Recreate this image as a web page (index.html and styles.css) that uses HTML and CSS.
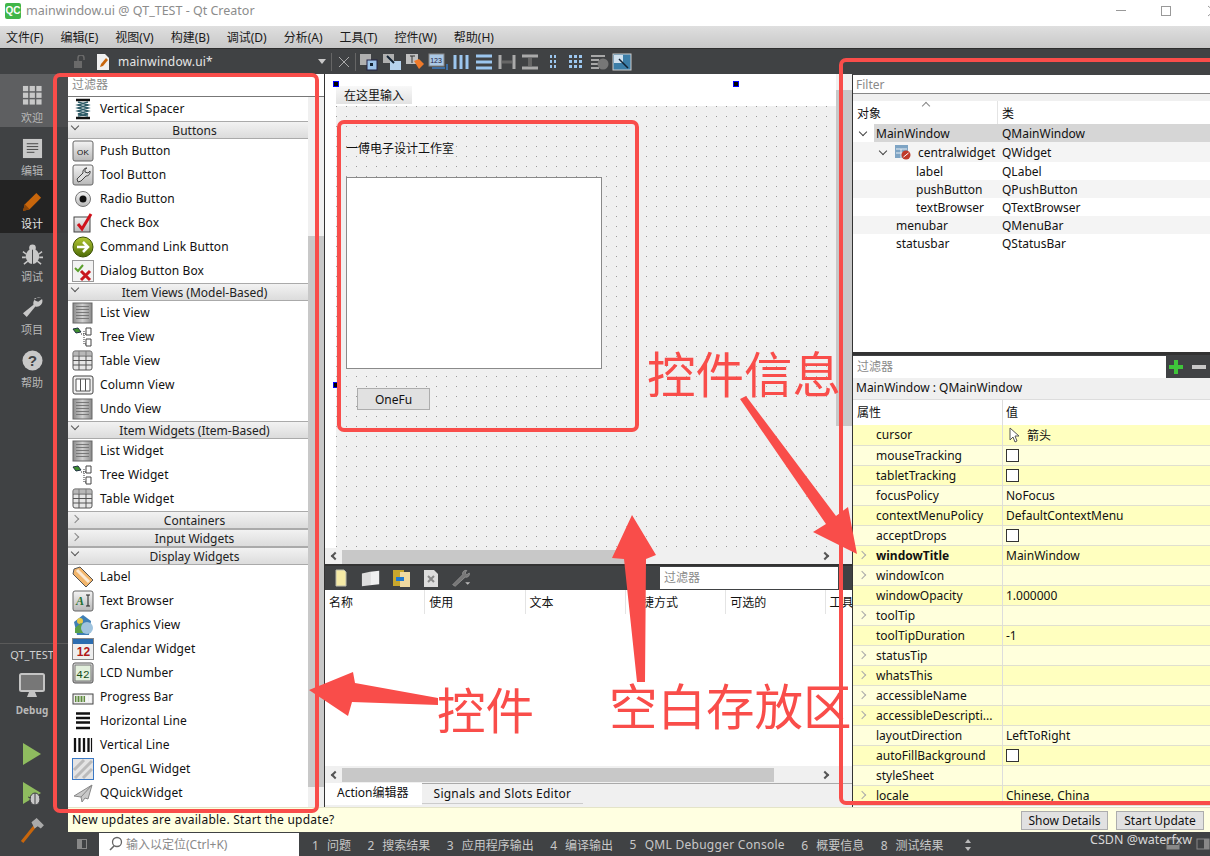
FILE: index.html
```html
<!DOCTYPE html>
<html lang="zh-CN">
<head>
<meta charset="utf-8">
<title>mainwindow.ui @ QT_TEST - Qt Creator</title>
<link rel="stylesheet" href="styles.css">
</head>
<body>
<svg class="defs" aria-hidden="true">
  <defs>
    <linearGradient id="g-box" x1="0" y1="0" x2="0" y2="1"><stop offset="0" stop-color="#f4f4f4"/><stop offset="1" stop-color="#b8b8b8"/></linearGradient>
    <linearGradient id="g-grey" x1="0" y1="0" x2="1" y2="0"><stop offset="0" stop-color="#8a8a8a"/><stop offset=".5" stop-color="#d0d0d0"/><stop offset="1" stop-color="#8a8a8a"/></linearGradient>
    <linearGradient id="g-green" x1="0" y1="0" x2="0" y2="1"><stop offset="0" stop-color="#b5c934"/><stop offset="1" stop-color="#4c6b06"/></linearGradient>
    <symbol id="i-spacer" viewBox="0 0 22 22"><path d="M4 2h14M4 20h14" stroke="#111" stroke-width="2.5"/><path d="M6 4l10 3-10 3 10 3-10 3 10 2M16 4L6 7l10 3-10 3 10 3-10 2" fill="none" stroke="#2d5a66" stroke-width="1.6"/></symbol>
    <symbol id="i-ok" viewBox="0 0 22 22"><rect x="1" y="1" width="20" height="20" rx="2" fill="url(#g-box)" stroke="#666"/><text x="11" y="14.5" font-size="8" font-family="Liberation Sans" text-anchor="middle" fill="#111">OK</text></symbol>
    <symbol id="i-tool" viewBox="0 0 22 22"><rect x="1" y="1" width="20" height="20" rx="2" fill="url(#g-box)" stroke="#666"/><path d="M15 4a4 4 0 0 0-4 5L5 15l1 3 3-1 5-5a4 4 0 0 0 4-5l-2 2-3-1 0-3z" fill="#ddd" stroke="#444"/></symbol>
    <symbol id="i-radio" viewBox="0 0 22 22"><circle cx="11" cy="11" r="7.5" fill="url(#g-box)" stroke="#777"/><circle cx="11" cy="11" r="3.5" fill="#111"/></symbol>
    <symbol id="i-check" viewBox="0 0 22 22"><rect x="2" y="5" width="16" height="15" fill="url(#g-box)" stroke="#444"/><path d="M6 12l4 5L19 2" fill="none" stroke="#d0121b" stroke-width="3"/></symbol>
    <symbol id="i-cmd" viewBox="0 0 22 22"><circle cx="11" cy="11" r="10" fill="url(#g-green)" stroke="#3c5205"/><path d="M5 11h10M11 6l5 5-5 5" fill="none" stroke="#fff" stroke-width="2.5"/></symbol>
    <symbol id="i-dialog" viewBox="0 0 22 22"><rect x=".5" y=".5" width="21" height="21" fill="#f2f2f2" stroke="#999"/><path d="M3 8l3 3 5-6" fill="none" stroke="#5aa02c" stroke-width="2"/><path d="M9 11l9 9M18 11l-9 9" stroke="#c8161d" stroke-width="3"/></symbol>
    <symbol id="i-list" viewBox="0 0 22 22"><rect x="1" y="1" width="19" height="20" fill="url(#g-grey)" stroke="#666"/><path d="M4 4.5h13M4 7.5h13M4 10.500h13M4 13.500h13M4 16.500h13" stroke="#777" stroke-width="1.100"/></symbol>
    <symbol id="i-tree" viewBox="0 0 22 22"><path d="M1 3l5-1 3 4-5 1z" fill="#3d8f2d" stroke="#234"/><path d="M9 8h5M12 5v13h2" fill="none" stroke="#333" stroke-dasharray="1 1"/><path d="M14 2h5v7h-5zM14 13h5v7h-5z" fill="#fff" stroke="#444"/></symbol>
    <symbol id="i-table" viewBox="0 0 22 22"><rect x="1" y="1" width="19" height="19" rx="2" fill="#e6e6e6" stroke="#555"/><path d="M1 6h19M1 10.500h19M1 15h19M7 1v19M14 1v19" stroke="#555"/><rect x="1" y="1" width="19" height="5" fill="#999" opacity=".6"/></symbol>
    <symbol id="i-column" viewBox="0 0 22 22"><rect x="1" y="2" width="20" height="18" rx="2" fill="#eee" stroke="#444"/><path d="M4 5h14v12H4z" fill="#fff" stroke="#555"/><path d="M8.500 5v12M13.500 5v12" stroke="#555"/></symbol>
    <symbol id="i-label" viewBox="0 0 22 22"><path d="M2 3l6-2 13 13-7 7L1 8z" fill="#f2b56b" stroke="#555"/><path d="M5 4l12 12" stroke="#fff" stroke-width="3" opacity=".7"/></symbol>
    <symbol id="i-text" viewBox="0 0 22 22"><rect x="1" y="1" width="20" height="20" rx="2" fill="url(#g-box)" stroke="#666"/><text x="8" y="15" font-size="12" font-weight="700" font-style="italic" font-family="Liberation Serif" text-anchor="middle" fill="#1f6f30">A</text><path d="M14 5h4M16 5v11M14 16h4" stroke="#222" fill="none"/></symbol>
    <symbol id="i-graphics" viewBox="0 0 22 22"><path d="M2 8l9-7 8 6-2 14H5z" fill="#3f7fb5"/><circle cx="8" cy="7" r="3" fill="#e8c84a"/><path d="M3 14l6-5 6 5v5H3z" fill="#5aa14a"/><circle cx="15" cy="14" r="6" fill="#9fc3de"/></symbol>
    <symbol id="i-cal" viewBox="0 0 22 22"><rect x=".5" y=".5" width="21" height="21" fill="#eee" stroke="#888"/><rect x="1" y="1" width="20" height="5" fill="#2b6cb0"/><text x="11.500" y="18" font-size="12" font-weight="700" font-family="Liberation Sans" text-anchor="middle" fill="#b01818">12</text></symbol>
    <symbol id="i-lcd" viewBox="0 0 22 22"><rect x="1" y="1" width="20" height="20" rx="2" fill="url(#g-box)" stroke="#555"/><rect x="3" y="3" width="16" height="16" fill="#e2efdc" stroke="#777"/><text x="11" y="15.500" font-size="11" font-family="Liberation Mono" text-anchor="middle" fill="#174d17">42</text></symbol>
    <symbol id="i-progress" viewBox="0 0 22 22"><rect x="1" y="8" width="20" height="10" fill="#eee" stroke="#444"/><rect x="3" y="10" width="10" height="6" fill="#5f8a3e"/><path d="M5 10v6M8 10v6M11 10v6M15 10v6M18 10v6" stroke="#fff"/></symbol>
    <symbol id="i-hline" viewBox="0 0 22 22"><path d="M4 3.500h14M4 8h14M4 12.500h14M4 18h14" stroke="#111" stroke-width="2.600"/></symbol>
    <symbol id="i-vline" viewBox="0 0 22 22"><path d="M3 4v14M7.500 4v14M12 4v14M16.500 4v14" stroke="#111" stroke-width="2.300"/><path d="M19.500 4v14" stroke="#111" stroke-width="1.200"/></symbol>
    <symbol id="i-gl" viewBox="0 0 22 22"><rect x=".5" y=".5" width="21" height="21" fill="#e4e4e4" stroke="#3a78c4"/><path d="M2 12L12 2M3 20L20 3M11 20l9-9" stroke="#bbb" stroke-width="3"/></symbol>
    <symbol id="i-quick" viewBox="0 0 22 22"><path d="M20 3L2 14l7 1 1 5 3-4 3 1z" fill="#c9c9c9" stroke="#888"/><path d="M9 15L20 3" stroke="#888"/></symbol>
  </defs>
</svg>

<div class="window">
  <header class="titlebar">
    <span class="qc-logo">QC</span>
    <span class="title-text">mainwindow.ui @ QT_TEST - Qt Creator</span>
    <span class="win-btn win-min"></span>
    <span class="win-btn win-max"></span>
    <span class="win-btn win-close">
      <svg width="10" height="16" viewBox="0 0 10 16"><path d="M1 3l6 5-6 5" fill="none" stroke="#999"/></svg>
    </span>
  </header>
  <nav class="menubar">
    <span>文件(F)</span><span>编辑(E)</span><span>视图(V)</span><span>构建(B)</span><span>调试(D)</span><span>分析(A)</span><span>工具(T)</span><span>控件(W)</span><span>帮助(H)</span>
  </nav>

  <div class="main">
    <aside class="modes">
      <div class="mode mode-welcome">
        <svg class="mode-ico" viewBox="0 0 22 22"><g fill="#c8c8c8"><rect x="1" y="1" width="5.500" height="5.500"/><rect x="8" y="1" width="5.500" height="5.500"/><rect x="15" y="1" width="5.500" height="5.500"/><rect x="1" y="8" width="5.500" height="5.500"/><rect x="8" y="8" width="5.500" height="5.500"/><rect x="15" y="8" width="5.500" height="5.500"/><rect x="1" y="15" width="5.500" height="5.500"/><rect x="8" y="15" width="5.500" height="5.500"/><rect x="15" y="15" width="5.500" height="5.500"/></g></svg>
        <span>欢迎</span>
      </div>
      <div class="mode">
        <svg class="mode-ico" viewBox="0 0 22 22"><rect x="1" y="1" width="20" height="20" fill="#c8c8c8"/><path d="M5 6h12M5 9h12M5 12h12M5 15h8" stroke="#444"/></svg>
        <span>编辑</span>
      </div>
      <div class="mode mode-active">
        <svg class="mode-ico" viewBox="0 0 22 22"><path d="M1 21l2-7L15 2l5 5L8 19z" fill="#c8660c"/><path d="M1 21l2-7 5 5z" fill="#8d4608"/></svg>
        <span>设计</span>
      </div>
      <div class="mode">
        <svg class="mode-ico" viewBox="0 0 22 22"><ellipse cx="11" cy="13" rx="7" ry="8" fill="#c8c8c8"/><circle cx="11" cy="4" r="3.500" fill="#c8c8c8"/><path d="M1 8l4 3M21 8l-4 3M0 14h4M22 14h-4M2 21l4-3M20 21l-4-3" stroke="#c8c8c8" stroke-width="1.600"/><path d="M11 6v15" stroke="#404244"/></svg>
        <span>调试</span>
      </div>
      <div class="mode">
        <svg class="mode-ico" viewBox="0 0 22 22"><path d="M20 1a6 6 0 0 0-8 7L1 17l4 4 9-11a6 6 0 0 0 7-8l-4 3-3-1-1-3z" fill="#c8c8c8"/></svg>
        <span>项目</span>
      </div>
      <div class="mode">
        <svg class="mode-ico" viewBox="0 0 22 22"><circle cx="11" cy="11" r="10.500" fill="#c8c8c8"/><text x="11" y="17" font-size="16" font-weight="700" font-family="Liberation Sans" text-anchor="middle" fill="#404244">?</text></svg>
        <span>帮助</span>
      </div>
      <div class="kit">
        <div class="kit-name">QT_TEST</div>
        <svg class="kit-monitor" viewBox="0 0 26 26"><rect x="1" y="1" width="24" height="17" rx="1.500" fill="#777" stroke="#c4c4c4" stroke-width="2"/><path d="M10 19h6l2 5H8z" fill="#c4c4c4"/></svg>
        <div class="kit-label">Debug</div>
        <svg class="run-ico run-first" viewBox="0 0 22 26"><path d="M2 2l18 11L2 24z" fill="#8fbc5f"/></svg>
        <svg class="run-ico" viewBox="0 0 22 26"><path d="M2 2l18 11L2 24z" fill="#8fbc5f"/><ellipse cx="14" cy="19" rx="5" ry="6" fill="#c8c8c8" stroke="#404244"/><path d="M14 13v12M7 17l3 1M21 17l-3 1M7 23l3-1M21 23l-3-1" stroke="#404244"/></svg>
        <svg class="run-ico run-last" viewBox="0 0 24 26"><path d="M2 24L15 8" stroke="#c8660c" stroke-width="3"/><path d="M11 5l5-4 7 7-3 3-3-2-3 2z" fill="#aaa"/></svg>
      </div>
    </aside>

    <div class="workspace">
      <div class="doctools">
        <svg class="lock" viewBox="0 0 14 14"><rect x="1" y="6" width="8" height="7" fill="#6a6a6a"/><path d="M5 6V3a3 3 0 0 1 6 0v2" fill="none" stroke="#6a6a6a" stroke-width="1.500"/></svg>
        <svg class="docicon" viewBox="0 0 14 16"><path d="M1 0h8l4 4v12H1z" fill="#f0f0f0"/><path d="M4 13l1-3 5-6 2 2-5 6z" fill="#c8660c"/></svg>
        <span class="docname">mainwindow.ui*</span>
        <span class="doc-drop"></span>
        <span class="sep"></span>
        <svg class="close-x" viewBox="0 0 12 12"><path d="M1 1l10 10M11 1L1 11" stroke="#aaa"/></svg>
        <span class="sep"></span>
        <div class="form-tools">
          <svg viewBox="0 0 20 18"><rect x="1" y="1" width="11" height="11" fill="#b0b0b0"/><rect x="8" y="7" width="10" height="10" fill="#9cc3ea" stroke="#224"/><rect x="11" y="10" width="3" height="3" fill="#123"/></svg>
          <svg viewBox="0 0 20 18"><rect x="1" y="1" width="11" height="9" fill="#b0b0b0"/><rect x="8" y="8" width="11" height="9" fill="#b6d3ee"/><path d="M5 3l7 7" stroke="#123" stroke-width="2"/></svg>
          <svg viewBox="0 0 20 18"><rect x="1" y="1" width="12" height="10" fill="#c0c0c0"/><path d="M5 3h5M7 3v7" stroke="#333"/><path d="M9 8l5-2 5 5-5 5z" fill="#f07a2a"/></svg>
          <svg viewBox="0 0 20 18"><rect x="1" y="1" width="15" height="12" fill="#aac8e6" stroke="#888"/><text x="8" y="10" font-size="7" font-family="Liberation Sans" text-anchor="middle" fill="#224">123</text><path d="M4 15h13M19 11v6" stroke="#3f7fc4" stroke-width="1.500"/></svg>
          <svg viewBox="0 0 20 18"><path d="M4 2v14M10 2v14M16 2v14" stroke="#9cc6ee" stroke-width="3"/></svg>
          <svg viewBox="0 0 20 18"><path d="M2 3h16M2 9h16M2 15h16" stroke="#9cc6ee" stroke-width="3"/></svg>
          <svg viewBox="0 0 20 18"><path d="M3 2v14M17 2v14" stroke="#aaa" stroke-width="3"/><path d="M5 9h10" stroke="#666" stroke-width="3"/></svg>
          <svg viewBox="0 0 20 18"><path d="M2 3h16M2 15h16" stroke="#aaa" stroke-width="3"/><path d="M10 5v8" stroke="#666" stroke-width="4"/></svg>
          <svg viewBox="0 0 20 18"><path d="M7 2h2v3H7zM11 2h2v3h-2zM7 7h2v3H7zM11 7h2v3h-2zM7 12h2v3H7zM11 12h2v3h-2z" fill="#9cc6ee"/></svg>
          <svg viewBox="0 0 20 18"><path d="M3 2h3v3H3zM8 2h3v3H8zM13 2h3v3h-3zM3 7h3v3H3zM8 7h3v3H8zM13 7h3v3h-3zM3 12h3v3H3zM8 12h3v3H8zM13 12h3v3h-3z" fill="#9cc6ee"/></svg>
          <svg viewBox="0 0 20 18"><path d="M2 2h14v2H2zM2 6h8v2H2zM2 10h7v2H2zM2 14h8v2H2z" fill="#a8a8a8"/><circle cx="14" cy="11" r="5.500" fill="#777"/></svg>
          <svg viewBox="0 0 20 18"><rect x="1" y="1" width="18" height="16" fill="#3c7ea8" stroke="#ccc"/><path d="M2 2h9v8H2z" fill="#cfe0ee"/><path d="M7 6l9 9" stroke="#123" stroke-width="1.500"/></svg>
        </div>
      </div>

      <div class="panes">
        <section class="widgetbox">
          <div class="wb-filter">过滤器</div>
          <div class="wb-body">
            <div class="wb-list">
              <div class="wb-row"><svg class="ico"><use href="#i-spacer"/></svg>Vertical Spacer</div>
              <div class="wb-head"><i class="chev open"></i>Buttons</div>
              <div class="wb-row"><svg class="ico"><use href="#i-ok"/></svg>Push Button</div>
              <div class="wb-row"><svg class="ico"><use href="#i-tool"/></svg>Tool Button</div>
              <div class="wb-row"><svg class="ico"><use href="#i-radio"/></svg>Radio Button</div>
              <div class="wb-row"><svg class="ico"><use href="#i-check"/></svg>Check Box</div>
              <div class="wb-row"><svg class="ico"><use href="#i-cmd"/></svg>Command Link Button</div>
              <div class="wb-row"><svg class="ico"><use href="#i-dialog"/></svg>Dialog Button Box</div>
              <div class="wb-head"><i class="chev open"></i>Item Views (Model-Based)</div>
              <div class="wb-row"><svg class="ico"><use href="#i-list"/></svg>List View</div>
              <div class="wb-row"><svg class="ico"><use href="#i-tree"/></svg>Tree View</div>
              <div class="wb-row"><svg class="ico"><use href="#i-table"/></svg>Table View</div>
              <div class="wb-row"><svg class="ico"><use href="#i-column"/></svg>Column View</div>
              <div class="wb-row"><svg class="ico"><use href="#i-list"/></svg>Undo View</div>
              <div class="wb-head"><i class="chev open"></i>Item Widgets (Item-Based)</div>
              <div class="wb-row"><svg class="ico"><use href="#i-list"/></svg>List Widget</div>
              <div class="wb-row"><svg class="ico"><use href="#i-tree"/></svg>Tree Widget</div>
              <div class="wb-row"><svg class="ico"><use href="#i-table"/></svg>Table Widget</div>
              <div class="wb-head"><i class="chev"></i>Containers</div>
              <div class="wb-head"><i class="chev"></i>Input Widgets</div>
              <div class="wb-head"><i class="chev open"></i>Display Widgets</div>
              <div class="wb-row"><svg class="ico"><use href="#i-label"/></svg>Label</div>
              <div class="wb-row"><svg class="ico"><use href="#i-text"/></svg>Text Browser</div>
              <div class="wb-row"><svg class="ico"><use href="#i-graphics"/></svg>Graphics View</div>
              <div class="wb-row"><svg class="ico"><use href="#i-cal"/></svg>Calendar Widget</div>
              <div class="wb-row"><svg class="ico"><use href="#i-lcd"/></svg>LCD Number</div>
              <div class="wb-row"><svg class="ico"><use href="#i-progress"/></svg>Progress Bar</div>
              <div class="wb-row"><svg class="ico"><use href="#i-hline"/></svg>Horizontal Line</div>
              <div class="wb-row"><svg class="ico"><use href="#i-vline"/></svg>Vertical Line</div>
              <div class="wb-row"><svg class="ico"><use href="#i-gl"/></svg>OpenGL Widget</div>
              <div class="wb-row"><svg class="ico"><use href="#i-quick"/></svg>QQuickWidget</div>
            </div>
            <div class="wb-scroll"><div class="wb-thumb"></div></div>
          </div>
        </section>

        <section class="center">
          <div class="design">
            <div class="design-view">
              <div class="form-white">
                <div class="form-menu">在这里输入</div>
                <div class="form-canvas">
                  <div class="form-label">一傅电子设计工作室</div>
                  <div class="form-browser"></div>
                  <div class="form-button">OneFu</div>
                </div>
                <span class="handle handle-a"></span>
                <span class="handle handle-b"></span>
                <span class="handle handle-c"></span>
              </div>
              <div class="vbar"><div class="vbar-thumb"></div></div>
            </div>
            <div class="hbar">
              <i class="arrow-l"></i><div class="hbar-thumb"></div><i class="arrow-r"></i>
            </div>
          </div>
          <div class="action-tools">
            <svg viewBox="0 0 18 18"><path d="M4 1h8l2 2v14H4z" fill="#f5eaa6" stroke="#bba"/></svg>
            <svg viewBox="0 0 22 18"><path d="M1 4l9-2v15l-9 1z" fill="#ddd"/><path d="M10 2l10-1v15l-10 1z" fill="#f0f0f0"/></svg>
            <svg viewBox="0 0 20 18"><rect x="2" y="1" width="11" height="16" fill="#c9a72e"/><rect x="9" y="3" width="10" height="15" fill="#f0d9a0"/><path d="M5 10h8" stroke="#1f78d1" stroke-width="4"/></svg>
            <svg viewBox="0 0 18 18"><path d="M2 1h10l4 4v13H2z" fill="#ddd"/><path d="M6 7l6 6M12 7l-6 6" stroke="#888" stroke-width="2"/></svg>
            <svg viewBox="0 0 24 20"><path d="M2 18L14 6a4 4 0 0 1 5-5l-2 3 2 2 3-2a4 4 0 0 1-5 5L5 20z" fill="#777" stroke="#aaa" stroke-width=".7"/><path d="M17 15h6l-3 3z" fill="#bbb"/></svg>
            <div class="action-filter">过滤器</div>
          </div>
          <div class="action-head">
            <span>名称</span><span>使用</span><span>文本</span><span>快捷方式</span><span>可选的</span><span class="last">工具</span>
          </div>
          <div class="action-body"></div>
          <div class="hbar hbar-bottom">
            <i class="arrow-l"></i><div class="hbar-thumb2"></div><i class="arrow-r"></i>
          </div>
          <div class="tabs">
            <span class="tab tab-active">Action编辑器</span><span class="tab">Signals and Slots Editor</span>
          </div>
        </section>

        <section class="rightpane">
          <div class="obj-filter">Filter</div>
          <div class="obj-gap"></div>
          <div class="obj-head"><span class="col1">对象<i class="sort"></i></span><span class="col2">类</span></div>
          <div class="tree">
            <div class="trow sel"><i class="chev open dark"></i><span class="t1">MainWindow</span><span class="t2">QMainWindow</span></div>
            <div class="trow alt tall"><span class="t1 central"><i class="chev open dark"></i>
              <svg class="cw-ico" viewBox="0 0 16 16"><rect x="0" y="1" width="13" height="13" fill="#7ea4c4"/><path d="M1 5h11M1 9h11M6 5v9" stroke="#e8eef4"/><circle cx="11" cy="11" r="4.500" fill="#c0392b"/><path d="M8.500 13l5-4" stroke="#fff"/></svg>centralwidget</span><span class="t2">QWidget</span></div>
            <div class="trow"><span class="t1 lvl3">label</span><span class="t2">QLabel</span></div>
            <div class="trow alt"><span class="t1 lvl3">pushButton</span><span class="t2">QPushButton</span></div>
            <div class="trow"><span class="t1 lvl3">textBrowser</span><span class="t2">QTextBrowser</span></div>
            <div class="trow alt"><span class="t1 lvl2">menubar</span><span class="t2">QMenuBar</span></div>
            <div class="trow"><span class="t1 lvl2">statusbar</span><span class="t2">QStatusBar</span></div>
          </div>
          <div class="prop-filter-bar">
            <div class="prop-filter">过滤器</div>
            <svg class="plus" viewBox="0 0 18 18"><path d="M7 2h4v5h5v4h-5v5H7v-5H2V7h5z" fill="#3fc53a"/></svg>
            <svg class="minus" viewBox="0 0 14 18"><rect x="0" y="7" width="14" height="4" fill="#c8c8c8"/></svg>
          </div>
          <div class="prop-title">MainWindow : QMainWindow</div>
          <div class="prop-head"><span class="p1">属性</span><span class="p2">值</span></div>
          <div class="props">
            <div class="prow prow-first"><span class="p1">cursor</span><span class="p2"><svg class="cursor-ico" viewBox="0 0 12 16"><path d="M2 1v12l3-3 2 5 2-1-2-5h4z" fill="#fff" stroke="#555"/></svg>箭头</span></div>
            <div class="prow"><span class="p1">mouseTracking</span><span class="p2"><i class="cb"></i></span></div>
            <div class="prow"><span class="p1">tabletTracking</span><span class="p2"><i class="cb"></i></span></div>
            <div class="prow"><span class="p1">focusPolicy</span><span class="p2">NoFocus</span></div>
            <div class="prow"><span class="p1">contextMenuPolicy</span><span class="p2">DefaultContextMenu</span></div>
            <div class="prow"><span class="p1">acceptDrops</span><span class="p2"><i class="cb"></i></span></div>
            <div class="prow"><span class="p1 bold"><i class="chev grey"></i>windowTitle</span><span class="p2">MainWindow</span></div>
            <div class="prow"><span class="p1"><i class="chev grey"></i>windowIcon</span><span class="p2"></span></div>
            <div class="prow"><span class="p1">windowOpacity</span><span class="p2">1.000000</span></div>
            <div class="prow"><span class="p1"><i class="chev grey"></i>toolTip</span><span class="p2"></span></div>
            <div class="prow"><span class="p1">toolTipDuration</span><span class="p2">-1</span></div>
            <div class="prow"><span class="p1"><i class="chev grey"></i>statusTip</span><span class="p2"></span></div>
            <div class="prow"><span class="p1"><i class="chev grey"></i>whatsThis</span><span class="p2"></span></div>
            <div class="prow"><span class="p1"><i class="chev grey"></i>accessibleName</span><span class="p2"></span></div>
            <div class="prow"><span class="p1"><i class="chev grey"></i>accessibleDescripti...</span><span class="p2"></span></div>
            <div class="prow"><span class="p1">layoutDirection</span><span class="p2">LeftToRight</span></div>
            <div class="prow"><span class="p1">autoFillBackground</span><span class="p2"><i class="cb"></i></span></div>
            <div class="prow"><span class="p1">styleSheet</span><span class="p2"></span></div>
            <div class="prow"><span class="p1"><i class="chev grey"></i>locale</span><span class="p2">Chinese, China</span></div>
          </div>
        </section>
      </div>

      <div class="updatebar">
        <span class="update-text">New updates are available. Start the update?</span>
        <span class="ubtn">Show Details</span>
        <span class="ubtn">Start Update</span>
      </div>

      <footer class="statusbar">
        <span class="pane-toggle"></span>
        <div class="locator">
          <svg class="search" viewBox="0 0 16 16"><circle cx="9" cy="6" r="4.500" fill="none" stroke="#666" stroke-width="1.300"/><path d="M6 10l-4 4" stroke="#666" stroke-width="1.600"/></svg>
          输入以定位(Ctrl+K)
        </div>
        <div class="out-tabs">
          <span><b>1</b>问题</span><span><b>2</b>搜索结果</span><span><b>3</b>应用程序输出</span><span><b>4</b>编译输出</span><span class="qml"><b>5</b>QML Debugger Console</span><span><b>6</b>概要信息</span><span><b>8</b>测试结果</span>
          <svg class="updown" viewBox="0 0 8 14"><path d="M4 1l3 4H1zM4 13l3-4H1z" fill="#bbb"/></svg>
        </div>
        <div class="status-right">
          <svg viewBox="0 0 14 14"><rect x="1" y="2" width="12" height="10" fill="none" stroke="#888"/><rect x="1" y="8" width="12" height="4" fill="#888"/></svg>
          <svg viewBox="0 0 14 14"><rect x="1" y="2" width="12" height="10" fill="none" stroke="#888"/><rect x="8" y="2" width="5" height="10" fill="#888"/></svg>
        </div>
      </footer>
    </div>
  </div>
</div>

<svg class="marks" viewBox="0 0 1210 856" aria-hidden="true">
  <g fill="none" stroke="#f94d4a" stroke-width="4">
    <rect x="55" y="75" width="262" height="736" rx="5"/>
    <rect x="339" y="122" width="298" height="308" rx="5"/>
    <rect x="841" y="60" width="375" height="743" rx="5"/>
  </g>
  <g fill="#f94d4a">
    <polygon points="309,690 353,672 355,683 438,698 438,705 352,702 348,716"/>
    <polygon points="632,515 656,555 646,559 645,682 637,682 624,559 612,558"/>
    <polygon points="740,399 746,396 836,516 848,507 857,554 813,532 826,524"/>
  </g>
</svg>
<div class="note note-info">控件信息</div>
<div class="note note-widgets">控件</div>
<div class="note note-blank">空白存放区</div>
<div class="watermark">CSDN @waterfxw</div>
</body>
</html>
```

FILE: styles.css
```css
* { box-sizing: border-box; }
html, body { margin: 0; padding: 0; }
body {
  position: relative;
  width: 1210px;
  height: 856px;
  overflow: hidden;
  background: #404244;
  font-family: "Noto Sans", "Noto Sans CJK SC", sans-serif;
  font-size: 12px;
  color: #111;
}
.defs { position: absolute; width: 0; height: 0; }
.window { display: flex; flex-direction: column; width: 1210px; height: 856px; }

/* title + menu */
.titlebar { display: flex; align-items: center; height: 26px; background: #fff; padding: 0 0 5px 5px; flex: none; }
.qc-logo { width: 16px; height: 16px; background: #41b649; color: #fff; font: 700 10px/16px "Liberation Sans", sans-serif; text-align: center; border-radius: 2px; }
.title-text { margin-left: 5px; font-size: 12.500px; color: #8c8c8c; }
.win-btn { display: block; flex: none; }
.win-min { margin-left: auto; width: 10px; height: 1px; background: #999; }
.win-max { margin-left: 35px; width: 10px; height: 10px; border: 1px solid #999; }
.win-close { margin-left: 36px; margin-right: -5px; width: 8px; height: 16px; }
.menubar { display: flex; gap: 17px; height: 23px; flex: none; align-items: center; padding-left: 6px; background: linear-gradient(#dfdfdf, #c8c8c8); border-bottom: 1px solid #2e2e2e; font-size: 12px; color: #1a1a1a; }
.main { display: flex; flex: 1; min-height: 0; }

/* modes */
.modes { display: flex; flex-direction: column; width: 68px; flex: none; padding-top: 25px; background: #404244; color: #b8b8b8; font-size: 11px; }
.mode { display: flex; flex-direction: column; align-items: center; justify-content: center; gap: 3px; height: 53px; padding: 8px 4px 0 0; }
.mode-welcome { background: linear-gradient(90deg, #5e5f61 0, #5e5f61 57px, #4a4b4d 57px); }
.mode-active { background: linear-gradient(90deg, #232323 0, #232323 57px, #3e3f41 57px); color: #e8e8e8; }
.mode-ico { width: 21px; height: 21px; }
.kit { display: flex; flex-direction: column; align-items: center; margin-top: auto; height: 213px; border-top: 1px solid #5a5a5a; padding-right: 4px; }
.kit-name { margin-top: 3px; font-size: 11px; color: #d0d0d0; }
.kit-monitor { width: 26px; height: 26px; margin-top: 11px; }
.kit-label { margin-top: 4px; font-size: 10px; font-weight: 700; color: #b8b8b8; }
.run-ico { width: 22px; height: 26px; margin-top: 13px; flex: none; }
.run-first { margin-top: 24px; }
.run-last { width: 25px; height: 27px; margin-top: 11px; }

/* workspace */
.workspace { display: flex; flex-direction: column; flex: 1; min-width: 0; }
.doctools { display: flex; align-items: center; height: 25px; flex: none; background: #404244; color: #e6e6e6; padding-left: 5px; }
.lock { width: 14px; height: 14px; }
.docicon { width: 14px; height: 16px; margin-left: 9px; }
.docname { width: 199px; margin-left: 8px; font-size: 12px; letter-spacing: .2px; }
.doc-drop { width: 0; height: 0; margin-left: 1px; border: 4px solid transparent; border-top: 5px solid #c8c8c8; border-bottom: 0; }
.sep { width: 1px; height: 18px; background: #666; margin-left: 5px; }
.close-x { width: 12px; height: 12px; margin-left: 6px; }
.form-tools { display: flex; gap: 3px; margin-left: 3px; }
.form-tools svg { width: 20px; height: 18px; }

.panes { display: flex; height: 733px; flex: none; background: #fff; }

/* widget box */
.widgetbox { display: flex; flex-direction: column; width: 257px; flex: none; border-right: 1px solid #333; background: #fff; overflow: hidden; }
.wb-filter { height: 23px; flex: none; line-height: 22px; padding-left: 4px; color: #8a8a8a; border-bottom: 1px solid #777; }
.wb-body { display: flex; flex: 1; min-height: 0; }
.wb-list { width: 240px; flex: none; }
.wb-row { display: flex; align-items: center; height: 24px; padding-left: 4px; gap: 6px; padding-bottom: 2px; white-space: nowrap; letter-spacing: .1px; }
.ico { width: 22px; height: 22px; flex: none; margin-top: 2px; }
.wb-head { position: relative; height: 18px; line-height: 18px; padding-left: 13px; text-align: center; background: linear-gradient(#f2f2f2, #dcdcdc); border-top: 1px solid #aaa; border-bottom: 1px solid #aaa; color: #222; }
.wb-scroll { width: 16px; flex: none; background: #f0f0f0; padding-top: 139px; padding-bottom: 20px; }
.wb-thumb { height: 100%; background: #c8c8c8; }
.chev { display: inline-block; width: 6px; height: 6px; border-right: 1.600px solid #888; border-top: 1.600px solid #888; transform: rotate(45deg); }
.chev.open { transform: rotate(135deg); border-color: #555; }
.wb-head .chev { position: absolute; left: 4px; top: 4px; }
.wb-head .chev.open { top: 1px; }

/* center */
.center { display: flex; flex-direction: column; width: 527px; flex: none; background: #fff; }
.design { display: flex; flex-direction: column; height: 492px; flex: none; }
.design-view { display: flex; flex: 1; min-height: 0; }
.form-white { position: relative; flex: 1; padding: 12px 0 0 11px; background: #fff; }
.form-menu { width: 76px; height: 18px; line-height: 20px; padding-left: 8px; font-size: 12px; background: linear-gradient(#f8f8f8, #e2e2e2); }
.form-canvas {
  height: 444px; margin-top: 2px; padding: 34px 0 0 10px;
  background-color: #f0f0f0;
  background-image: conic-gradient(at 1px 1px, transparent 270deg, #9a9a9a 270deg);
  background-size: 10px 10px;
}
.form-label { height: 16px; line-height: 18px; font-size: 12px; }
.form-browser { width: 256px; height: 192px; margin-top: 21px; background: #fff; border: 1px solid #8a8a8a; }
.form-button { width: 73px; height: 22px; margin: 19px 0 0 11px; line-height: 21px; text-align: center; background: #e1e1e1; border: 1px solid #adadad; }
.handle { position: absolute; width: 6px; height: 6px; background: #000; border: 1px solid #00f; }
.handle-a { left: 8px; top: 7px; }
.handle-b { left: 408px; top: 7px; }
.handle-c { left: 8px; top: 308px; }
.vbar { width: 16px; flex: none; background: #f0f0f0; padding-top: 16px; }
.vbar-thumb { height: 336px; background: #c8c8c8; }
.hbar { display: flex; align-items: center; height: 18px; flex: none; background: #f0f0f0; border-bottom: 2px solid #333; }
.hbar-bottom { height: 17px; border-bottom: 0; }
.hbar-thumb { width: 284px; height: 16px; margin-left: 1px; background: #c8c8c8; }
.hbar-thumb2 { width: 432px; height: 14px; margin-left: 1px; background: #c8c8c8; }
.arrow-l, .arrow-r { display: block; width: 6px; height: 6px; flex: none; border-top: 2px solid #555; }
.arrow-l { margin-left: 7px; margin-right: 3px; border-left: 2px solid #555; transform: rotate(-45deg); }
.arrow-r { margin-left: auto; margin-right: 24px; border-right: 2px solid #555; transform: rotate(45deg); }
.action-tools { display: flex; align-items: center; gap: 10px; height: 24px; flex: none; background: #404244; padding-left: 6px; }
.action-tools svg { width: 20px; height: 18px; }
.action-filter { width: 178px; height: 22px; margin-left: auto; margin-right: 14px; padding-left: 4px; line-height: 22px; background: #fff; color: #8a8a8a; }
.action-head { display: flex; height: 24px; flex: none; line-height: 26px; overflow: hidden; }
.action-head span { width: 100.300px; padding-left: 4px; flex: none; border-right: 1px solid #e4e4e4; white-space: nowrap; }
.action-head .last { width: 26px; padding-left: 3px; border-right: 0; }
.action-body { height: 152px; flex: none; background: #fff; }
.tabs { display: flex; flex: 1; background: #f0f0f0; border-top: 1px solid #aaa; padding-left: 0; }
.tab { height: 20px; line-height: 19px; padding: 0 12px; letter-spacing: .25px; border-bottom: 1px solid #ccc; }
.tab-active { background: #fff; margin-top: -1px; height: 22px; padding-right: 13px; border-bottom: 0; letter-spacing: 0; }

/* right */
.rightpane { display: flex; flex-direction: column; flex: 1; min-width: 0; border-left: 1px solid #333; border-top: 1px solid #404244; background: #fff; }
.obj-filter { height: 19px; flex: none; line-height: 20px; padding-left: 3px; color: #8a8a8a; border-bottom: 1px solid #888; }
.obj-gap { height: 7px; flex: none; background: #f0f0f0; }
.obj-head { display: flex; height: 23px; flex: none; line-height: 26px; }
.col1 { position: relative; width: 145px; padding-left: 4px; border-right: 1px solid #e4e4e4; }
.col2 { padding-left: 4px; }
.sort { position: absolute; left: 70px; top: 2px; width: 6px; height: 6px; border-left: 1px solid #888; border-top: 1px solid #888; transform: rotate(45deg); }
.tree { height: 228px; flex: none; }
.trow { position: relative; display: flex; align-items: center; height: 18px; padding-left: 0; }
.trow.tall { height: 20px; }
.trow.alt { background: #f4f4f4; }
.trow.sel { background: linear-gradient(90deg, #fff 0, #fff 21px, #d6d6d6 21px); }
.trow .chev.dark { flex: none; margin: -3px 0 0 7px; border-color: #444; }
.t1 { width: 145px; flex: none; white-space: nowrap; }
.t2 { padding-left: 4px; }
.sel .t1 { width: 132px; padding-left: 10px; }
.central { display: flex; align-items: center; padding-left: 27px; }
.central .chev.dark { flex: none; margin: -3px 8px 0 0; }
.cw-ico { width: 16px; height: 16px; margin-right: 7px; flex: none; margin-left: 1px; }
.lvl3 { padding-left: 63px; }
.lvl2 { padding-left: 43px; }
.prop-filter-bar { display: flex; align-items: center; height: 26px; flex: none; background: #404244; border-top: 3px solid #333; }
.prop-filter { width: 313px; height: 22px; line-height: 22px; padding-left: 4px; background: #fff; color: #8a8a8a; }
.plus { width: 18px; height: 18px; margin-left: 1px; }
.minus { width: 14px; height: 18px; margin-left: 7px; }
.prop-title { height: 22px; flex: none; line-height: 19px; padding-left: 3px; background: #f0f0f0; border-bottom: 1px solid #ddd; }
.prop-head { display: flex; height: 25px; flex: none; line-height: 25px; }
.prop-head .p1 { padding-left: 4px; }
.p1 { position: relative; display: block; width: 150px; flex: none; padding-left: 23px; border-right: 1px solid #ddd; white-space: nowrap; }
.p2 { display: flex; align-items: center; padding-left: 3px; flex: 1; }
.prow { display: flex; height: 20px; line-height: 19px; border-bottom: 1px solid #e0e0d0; background: #ffffdc; }
.prow:nth-child(odd) { background: #ffffbf; }
.prow-first { height: 21px; line-height: 19px; }
.prow .p1 .chev { position: absolute; left: 6px; top: 6px; }
.bold { font-weight: 700; }
.chev.grey { border-color: #aaa; }
.cb { display: block; width: 13px; height: 13px; margin-top: -1px; background: #fff; border: 1px solid #333; }
.cursor-ico { width: 12px; height: 16px; margin: 0 7px 0 2px; }

/* bottom */
.updatebar { display: flex; align-items: center; gap: 8px; height: 25px; flex: none; padding: 0 6px 0 4px; background: #ffffe1; border-top: 1px solid #e4e4c8; }
.update-text { margin-right: auto; padding-bottom: 2px; letter-spacing: .25px; }
.ubtn { width: 87px; height: 19px; line-height: 17px; text-align: center; background: #e1e1e1; border: 1px solid #adadad; }
.ubtn:last-child { width: 88px; }
.statusbar { display: flex; align-items: center; height: 24px; flex: none; background: #404244; color: #c8c8c8; }
.pane-toggle { width: 10px; height: 10px; margin-left: 9px; border: 1px solid #888; border-left: 5px solid #888; }
.locator { display: flex; align-items: center; width: 200px; height: 23px; margin-left: 12px; padding-left: 9px; gap: 2px; background: #fff; color: #8a8a8a; }
.search { width: 16px; height: 16px; }
.out-tabs { display: flex; align-items: center; gap: 16.500px; margin-left: 13px; padding-top: 1px; white-space: nowrap; font-size: 12px; }
.out-tabs b { font-weight: 400; margin-right: 8px; }
.out-tabs .qml { letter-spacing: .27px; }
.updown { width: 8px; height: 14px; margin-left: 4px; }
.status-right { display: flex; gap: 16px; margin-left: auto; padding-right: 0; }
.status-right svg { width: 14px; height: 14px; }

/* annotations drawn over the screenshot */
.marks { position: absolute; left: 0; top: 0; width: 1210px; height: 856px; pointer-events: none; }
.note { position: absolute; font-family: "Noto Sans CJK SC", sans-serif; font-size: 48.500px; line-height: 56px; color: #f94d4a; white-space: nowrap; }
.note-info { left: 647px; top: 344px; }
.note-widgets { left: 437px; top: 680px; }
.note-blank { left: 609px; top: 676px; }
.watermark { position: absolute; left: 1090px; top: 831px; font-size: 12.500px; color: #d8d8d8; }
```
